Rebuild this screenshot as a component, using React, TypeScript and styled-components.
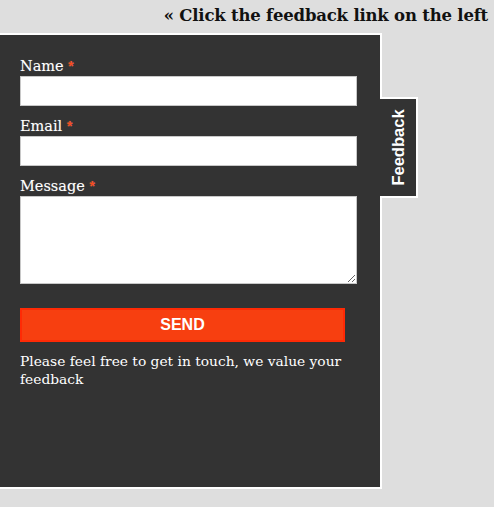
import styled, { createGlobalStyle } from "styled-components"

const Global = createGlobalStyle`
  html, body {
    margin: 0;
    padding: 0;
    background: #dedede;
  }
  body {
    font-family: "DejaVu Serif", "Liberation Serif", serif;
  }
`

const Hint = styled.h1`
  margin: 0;
  height: 33px;
  padding: 6px 6px 0 0;
  box-sizing: border-box;
  text-align: right;
  font-family: "DejaVu Serif", serif;
  font-size: 16.5px;
  font-weight: bold;
  line-height: 20px;
  color: #111;
  letter-spacing: -0.2px;
`

const Panel = styled.div`
  position: relative;
  width: 360px;
  height: 431px;
  background: #333333;
  border: 2px solid #ffffff;
  border-left: none;
  padding: 21px 0 0 20px;
`

const Form = styled.form`
  display: flex;
  flex-direction: column;
  width: 337px;
`

const Label = styled.label<{ $first?: boolean }>`
  display: block;
  margin-top: ${p => (p.$first ? "0" : "10px")};
  font-size: 14.5px;
  line-height: 20px;
  color: #ffffff;
  text-shadow: 0 0 1px rgba(255,255,255,0.3);
`

const Req = styled.span`
  color: #f64b1e;
  font-family: "Liberation Sans", sans-serif;
  font-weight: bold;
  font-size: 14px;
`

const Input = styled.input`
  display: block;
  width: 337px;
  height: 30px;
  box-sizing: border-box;
  border: 1px solid #c8c8c8;
  background: #fff;
  margin: 0;
`

const Area = styled.textarea`
  display: block;
  width: 337px;
  height: 88px;
  box-sizing: border-box;
  border: 1px solid #c8c8c8;
  background: #fff;
  margin: 0;
  resize: both;
`

const Send = styled.button`
  margin-top: 24px;
  width: 325px;
  height: 34px;
  background: #f73f10;
  border: 2px solid #ff2a05;
  color: #fff;
  font-family: "Liberation Sans", Arial, sans-serif;
  font-weight: bold;
  font-size: 16px;
  padding: 0;
  cursor: pointer;
`

const Note = styled.p`
  margin: 10px 0 0;
  width: 335px;
  font-size: 13.8px;
  line-height: 18px;
  color: #ffffff;
`

const Tab = styled.a`
  position: absolute;
  left: 380px;
  top: 62px;
  width: 36px;
  height: 97px;
  background: #333333;
  border: 2px solid #ffffff;
  border-left: none;
  display: flex;
  align-items: center;
  justify-content: center;
  text-decoration: none;
`

const TabText = styled.span`
  transform: rotate(-90deg);
  white-space: nowrap;
  color: #fff;
  font-family: "Liberation Sans", Arial, sans-serif;
  font-weight: bold;
  font-size: 16.5px;
`

export default function App() {
  return (
    <>
      <Global />
      <Hint>« Click the feedback link on the left</Hint>
      <Panel>
        <Form>
          <Label $first>Name <Req>*</Req></Label>
          <Input type="text" />
          <Label>Email <Req>*</Req></Label>
          <Input type="text" />
          <Label>Message <Req>*</Req></Label>
          <Area />
          <Send type="button">SEND</Send>
          <Note>Please feel free to get in touch, we value your feedback</Note>
        </Form>
        <Tab href="#">
          <TabText>Feedback</TabText>
        </Tab>
      </Panel>
    </>
  )
}
